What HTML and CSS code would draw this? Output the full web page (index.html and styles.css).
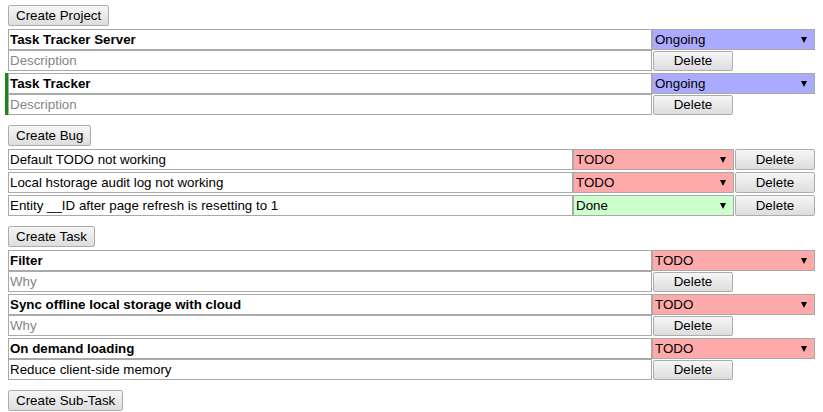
FILE: index.html
```html
<!DOCTYPE html>
<html>
<head>
<meta charset="utf-8">
<title>Task Tracker</title>
<link rel="stylesheet" href="styles.css">
</head>
<body>
<div class="page">
  <section class="section">
    <button class="btn create">Create Project</button>
    <div class="list">
      <div class="card">
        <div class="row pair">
          <input class="field title" value="Task Tracker Server">
          <div class="sel ongoing"><select><option>Ongoing</option></select></div>
        </div>
        <div class="row pair">
          <input class="field" placeholder="Description">
          <button class="btn del sub">Delete</button>
        </div>
      </div>
      <div class="card active">
        <div class="row pair">
          <input class="field title" value="Task Tracker">
          <div class="sel ongoing"><select><option>Ongoing</option></select></div>
        </div>
        <div class="row pair">
          <input class="field" placeholder="Description">
          <button class="btn del sub">Delete</button>
        </div>
      </div>
    </div>
  </section>

  <section class="section">
    <button class="btn create">Create Bug</button>
    <div class="list">
      <div class="row bug">
        <input class="field" value="Default TODO not working">
        <div class="sel todo"><select><option>TODO</option></select></div>
        <button class="btn del">Delete</button>
      </div>
      <div class="row bug">
        <input class="field" value="Local hstorage audit log not working">
        <div class="sel todo"><select><option>TODO</option></select></div>
        <button class="btn del">Delete</button>
      </div>
      <div class="row bug">
        <input class="field" value="Entity __ID after page refresh is resetting to 1">
        <div class="sel done"><select><option>Done</option></select></div>
        <button class="btn del">Delete</button>
      </div>
    </div>
  </section>

  <section class="section">
    <button class="btn create">Create Task</button>
    <div class="list">
      <div class="card">
        <div class="row pair">
          <input class="field title" value="Filter">
          <div class="sel todo"><select><option>TODO</option></select></div>
        </div>
        <div class="row pair">
          <input class="field" placeholder="Why">
          <button class="btn del sub">Delete</button>
        </div>
      </div>
      <div class="card">
        <div class="row pair">
          <input class="field title" value="Sync offline local storage with cloud">
          <div class="sel todo"><select><option>TODO</option></select></div>
        </div>
        <div class="row pair">
          <input class="field" placeholder="Why">
          <button class="btn del sub">Delete</button>
        </div>
      </div>
      <div class="card">
        <div class="row pair">
          <input class="field title" value="On demand loading">
          <div class="sel todo"><select><option>TODO</option></select></div>
        </div>
        <div class="row pair">
          <input class="field" value="Reduce client-side memory">
          <button class="btn del sub">Delete</button>
        </div>
      </div>
    </div>
  </section>

  <section class="section">
    <button class="btn create">Create Sub-Task</button>
  </section>
</div>
</body>
</html>
```

FILE: styles.css
```css
* { box-sizing: border-box; }

html, body {
  margin: 0;
  padding: 0;
  background: #ffffff;
}

body {
  font-family: "Liberation Sans", Arial, sans-serif;
  font-size: 13px;
  color: #000;
}

.page {
  padding: 5px 8px 0 8px;
  display: flex;
  flex-direction: column;
  gap: 10px;
}

.section {
  display: flex;
  flex-direction: column;
  align-items: flex-start;
  gap: 3px;
}

.list {
  align-self: stretch;
  display: flex;
  flex-direction: column;
  gap: 2px;
}

.card {
  display: flex;
  flex-direction: column;
}

.card.active {
  margin-left: -3px;
  border-left: 3px solid #178517;
}

.row {
  display: grid;
  align-items: start;
  height: 21px;
}

.row.pair {
  grid-template-columns: 1fr 163px;
}

.row.bug {
  grid-template-columns: 1fr 161px 81px;
}

.btn {
  font-family: "Liberation Sans", Arial, sans-serif;
  font-size: 13.33px;
  color: #000;
  height: 21px;
  padding: 0 7px;
  border: 1px solid #adadad;
  border-radius: 2px;
  background: linear-gradient(#f6f6f6, #dddddd);
  line-height: 19px;
  cursor: pointer;
}

.btn.del {
  width: 80px;
  padding: 0;
  margin-left: 1px;
}

.btn.del.sub {
  height: 20px;
  margin-top: 1px;
  line-height: 18px;
}

.field {
  min-width: 0;
  width: 100%;
  height: 21px;
  margin: 0;
  padding: 1px 1px;
  border: 1px solid #a9a9a9;
  font-family: "Liberation Sans", Arial, sans-serif;
  font-size: 13.33px;
  color: #000;
  background: #fff;
  outline: none;
}

.field.title {
  font-weight: bold;
}

.field::placeholder {
  color: #858585;
}

.sel {
  position: relative;
  height: 21px;
  border: 1px solid #a9a9a9;
}

.sel.ongoing { background: #aaaaff; }
.sel.todo { background: #ffaaaa; }
.sel.done { background: #ccffcc; }

.sel select {
  appearance: none;
  -webkit-appearance: none;
  width: 100%;
  height: 19px;
  border: 0;
  margin: 0;
  padding: 0 2px;
  background: transparent;
  font-family: "Liberation Sans", Arial, sans-serif;
  font-size: 13.33px;
  color: #000;
  outline: none;
}

.sel::after {
  content: "";
  position: absolute;
  right: 7px;
  top: 7px;
  width: 0;
  height: 0;
  border-left: 3.5px solid transparent;
  border-right: 3.5px solid transparent;
  border-top: 6px solid #000;
  pointer-events: none;
}
```
